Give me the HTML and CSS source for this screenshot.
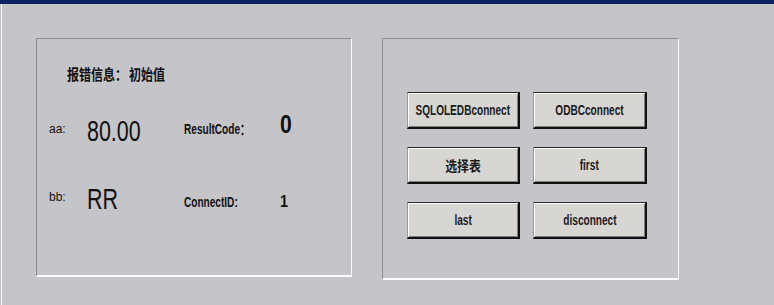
FILE: index.html
```html
<!DOCTYPE html>
<html lang="zh-CN">
<head>
<meta charset="utf-8">
<title>ADO</title>
<link rel="stylesheet" href="styles.css">
</head>
<body>
<div class="window">
  <div class="titlebar"></div>
  <div class="client">
    <section class="group info">
      <div class="title"><span class="cjk">报错信息：</span><span class="cjk val">初始值</span></div>
      <div class="row row1">
        <span class="lbl">aa:</span>
        <span class="big"><span class="sq">80.00</span></span>
        <span class="lbl2"><span class="nar">ResultCode：</span></span>
        <span class="code"><span class="nar">0</span></span>
      </div>
      <div class="row row2">
        <span class="lbl">bb:</span>
        <span class="big"><span class="sq">RR</span></span>
        <span class="lbl2 lo"><span class="nar">ConnectID:</span></span>
        <span class="cid"><span class="nar">1</span></span>
      </div>
    </section>
    <section class="group buttons">
      <div class="btn-grid">
        <button class="btn"><span class="nar">SQLOLEDBconnect</span></button>
        <button class="btn"><span class="nar">ODBCconnect</span></button>
        <button class="btn"><span class="cjk small">选择表</span></button>
        <button class="btn"><span class="nar">first</span></button>
        <button class="btn"><span class="nar">last</span></button>
        <button class="btn"><span class="nar">disconnect</span></button>
      </div>
    </section>
  </div>
</div>
</body>
</html>
```
FILE: styles.css
```css
html, body {
  margin: 0;
  height: 100%;
}
body {
  background: #c5c4c9;
  font-family: "Liberation Sans", Arial, sans-serif;
  color: #111;
  overflow: hidden;
}
.window {
  height: 305px;
  display: flex;
  flex-direction: column;
}
.titlebar {
  height: 4px;
  background: #0d2262;
}
.client {
  flex: 1;
  margin-left: 1px;
  border-left: 1px solid #f4f4f4;
  padding: 34px 0 0 34px;
  display: flex;
  gap: 30px;
  align-items: flex-start;
}
.group {
  box-sizing: border-box;
  border-style: solid;
  border-width: 1px 1px 2px 1px;
  border-color: #8e8d92 #fbfbfb #fbfbfb #8e8d92;
}
.info {
  width: 316px;
  height: 239px;
  padding: 25px 0 0 12px;
}
.title {
  margin-left: 18px;
  height: 20px;
  display: flex;
  align-items: center;
}
.cjk {
  display: inline-block;
  font-family: "Noto Sans CJK SC", sans-serif;
  font-weight: 700;
  font-size: 15px;
  line-height: 20px;
  transform: scaleX(0.8);
  transform-origin: left center;
}
.title .val {
  margin-left: -13px;
}
.row {
  display: flex;
  align-items: center;
  height: 40px;
}
.row1 { margin-top: 24px; }
.row2 { margin-top: 28px; }
.lbl {
  width: 38px;
  font-size: 12px;
  margin-top: 2px;
}
.big {
  width: 97px;
  font-size: 29px;
  line-height: 32px;
  margin-top: 5px;
}
.sq {
  display: inline-block;
  transform: scaleX(0.74);
  transform-origin: left center;
}
.nar {
  display: inline-block;
  font-weight: 700;
  transform: scaleX(0.72);
}
.lbl2 {
  width: 96px;
  font-size: 14px;
}
.lbl2 .nar { transform-origin: left center; }
.lbl2.lo { margin-top: 12px; }
.code {
  font-size: 25px;
  margin-top: -8px;
}
.code .nar, .cid .nar { transform-origin: left center; transform: scaleX(0.85); }
.cid {
  font-size: 17px;
  margin-top: 12px;
}
.buttons {
  width: 297px;
  height: 242px;
  padding: 53px 0 0 24px;
}
.btn-grid {
  display: grid;
  grid-template-columns: 113px 114px;
  grid-auto-rows: 37px;
  gap: 18px 13px;
}
.btn {
  box-sizing: border-box;
  margin: 0;
  padding: 0;
  background: #d7d6d3;
  border-style: solid;
  border-width: 1px 2px 2px 1px;
  border-color: #2a2a2a #111 #111 #9a9a9a;
  box-shadow: inset 1px 1px 0 #fdfdfd, inset -1px -1px 0 #7e7e7e;
  font-family: "Liberation Sans", Arial, sans-serif;
  font-size: 14px;
  color: #1a1a1a;
  display: flex;
  align-items: center;
  justify-content: center;
  white-space: nowrap;
  overflow: visible;
}
.btn .cjk.small {
  font-size: 14px;
  transform: scaleX(0.85);
  transform-origin: center;
}
```
